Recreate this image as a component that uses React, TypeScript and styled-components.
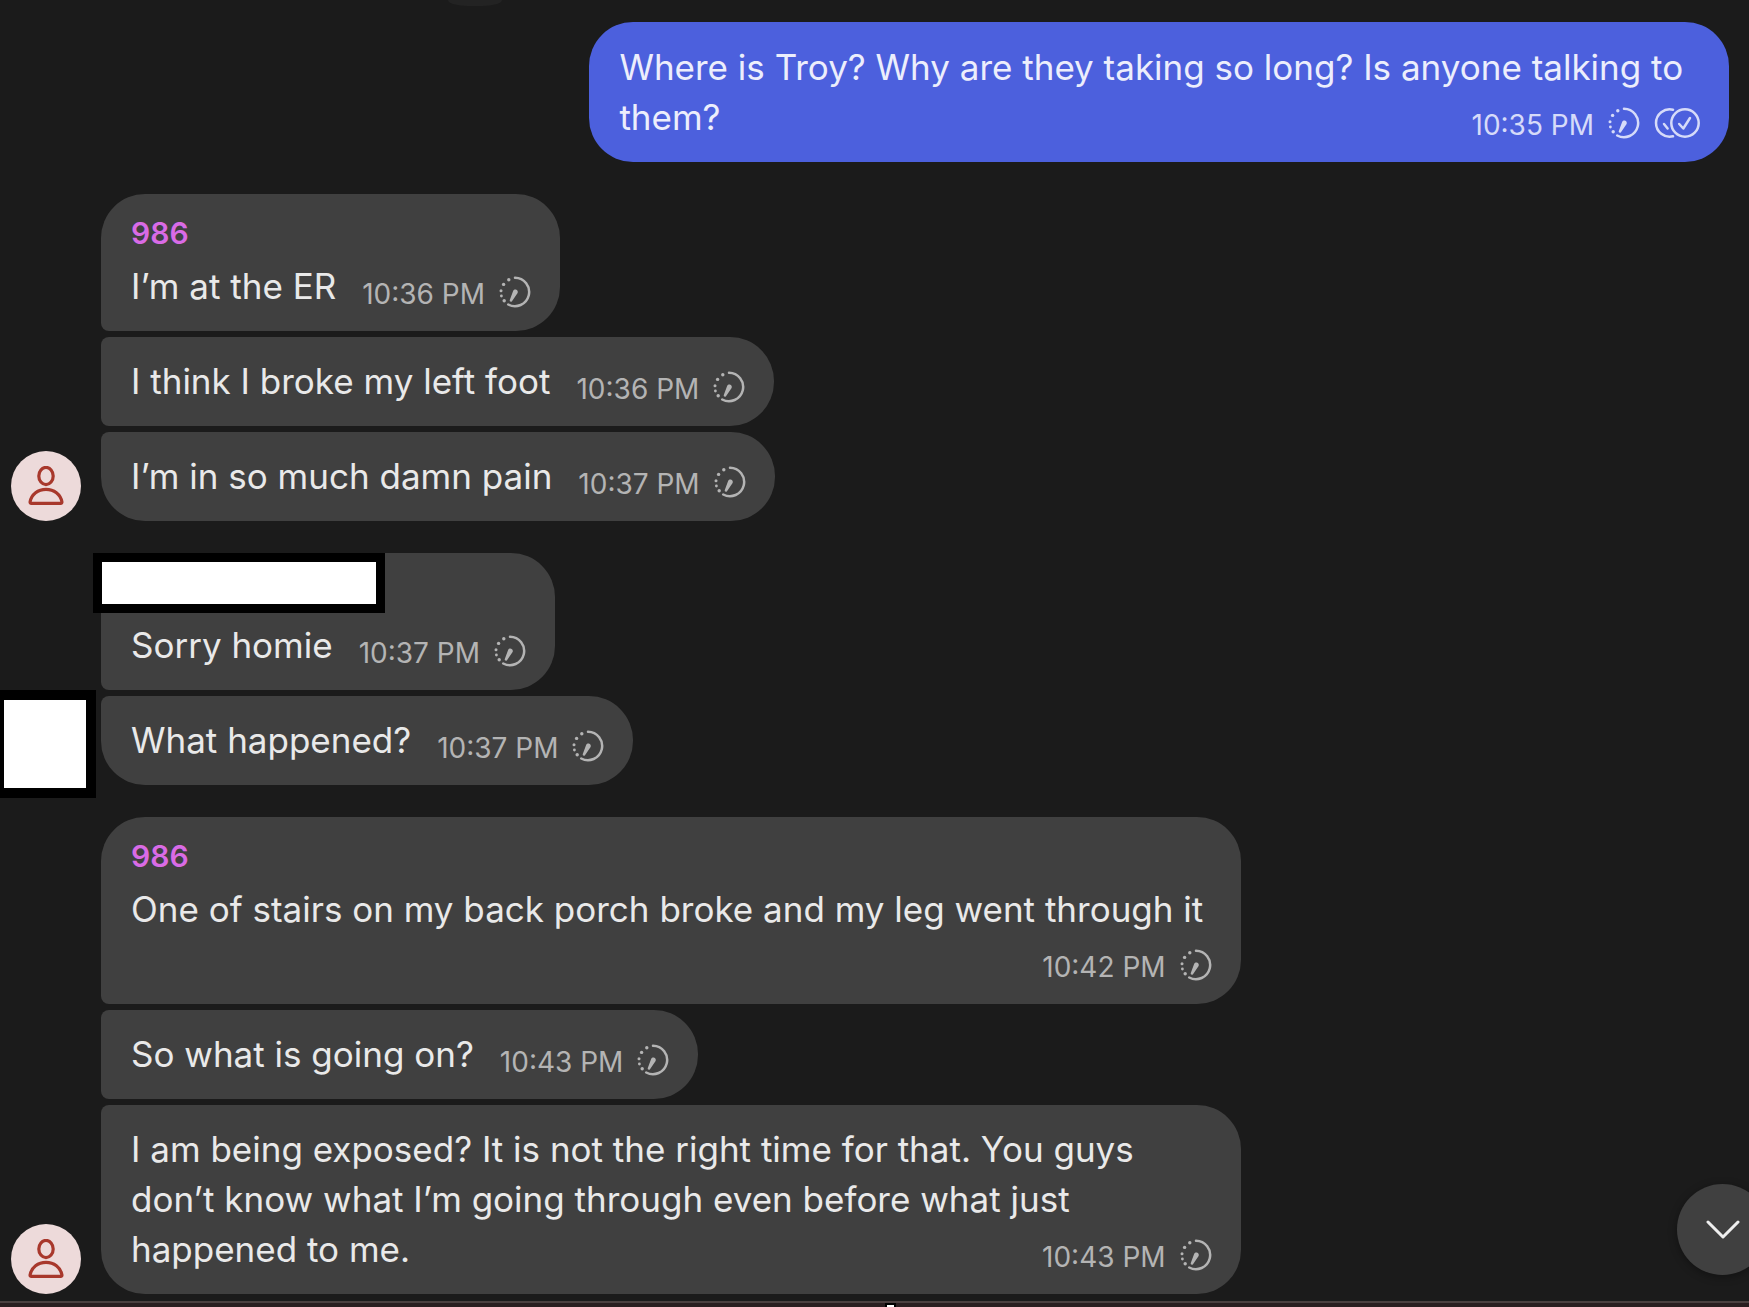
import React from "react";
import styled, { createGlobalStyle } from "styled-components";

const GlobalStyle = createGlobalStyle`
  * { box-sizing: border-box; }
  body {
    margin: 0;
    background: #1b1b1b;
    font-family: Inter, "Liberation Sans", sans-serif;
    color: #e9e9e9;
  }
`;

const Page = styled.main`
  position: relative;
  min-height: 100vh;
  display: flex;
  flex-direction: column;
  overflow: hidden;
`;

const DatePill = styled.div`
  width: 54px;
  height: 6px;
  margin-left: 448px;
  background: #232323;
  border-radius: 0 0 20px 20px / 0 0 6px 6px;
`;

const Timeline = styled.div`
  flex: 1;
  display: flex;
  flex-direction: column;
  gap: 32px;
  padding: 16px 20px 7px 11px;
`;

const Group = styled.section`
  display: flex;
  align-items: flex-end;
  gap: 20px;
`;

const AvatarSlot = styled.div`
  position: relative;
  flex: none;
  width: 70px;
  height: 70px;
`;

const Avatar = styled.div`
  display: flex;
  align-items: center;
  justify-content: center;
  width: 70px;
  height: 70px;
  border-radius: 50%;
  background: #eddada;
  color: #a8382c;
`;

const RedactedAvatar = styled.div`
  position: absolute;
  left: -17px;
  bottom: -13px;
  width: 102px;
  height: 108px;
  border: 10px solid #000;
  background: #fff;
`;

const Stack = styled.div<{ $outgoing?: boolean }>`
  flex: 1;
  min-width: 0;
  display: flex;
  flex-direction: column;
  align-items: ${(p) => (p.$outgoing ? "flex-end" : "flex-start")};
  gap: 6px;
`;

const Bubble = styled.article<{ $outgoing?: boolean; $first: boolean; $last: boolean }>`
  position: relative;
  max-width: 70%;
  padding: ${(p) => (p.$outgoing ? 20 : 19)}px 29px 20px 30px;
  background: ${(p) => (p.$outgoing ? "#4c60dd" : "#404040")};
  color: ${(p) => (p.$outgoing ? "#eceefc" : "#e9e9e9")};
  border-radius: ${(p) => (p.$first ? 44 : 8)}px 44px 44px ${(p) => (p.$last ? 44 : 8)}px;
`;

const Sender = styled.div`
  height: 40px;
  margin-bottom: 8px;
  font-size: 30px;
  line-height: 40px;
  font-weight: 600;
  color: #d96be6;
`;

const RedactedName = styled.div`
  position: absolute;
  left: -8px;
  top: 0;
  width: 292px;
  height: 60px;
  border: 9px solid #000;
  background: #fff;
`;

const Text = styled.div`
  display: flow-root;
  font-size: 35px;
  line-height: 50px;
`;

const Meta = styled.span<{ $outgoing?: boolean }>`
  float: right;
  display: flex;
  align-items: center;
  gap: 14px;
  height: 50px;
  margin-left: 26px;
  padding-top: 16px;
  font-size: 28px;
  line-height: 34px;
  color: ${(p) => (p.$outgoing ? "#d6dbf9" : "#b4b4b4")};

  svg {
    flex: none;
    margin-bottom: 4px;
  }
`;

const ScrollButton = styled.button`
  position: absolute;
  right: -19px;
  bottom: 32px;
  width: 91px;
  height: 91px;
  padding: 0;
  display: flex;
  align-items: center;
  justify-content: center;
  border: 0;
  border-radius: 50%;
  background: #404040;
  color: #efefef;
  box-shadow: 0 2px 8px rgba(0, 0, 0, 0.35);
`;

const BottomEdge = styled.div`
  display: flex;
  justify-content: center;
  height: 6px;
  border-top: 2px solid #4b4040;
  background: #2a1e20;
`;

const EdgeHandle = styled.div`
  width: 11px;
  margin-left: 31px;
  border: 2px solid #000;
  border-bottom: 0;
  background: #fff;
`;

const PersonIcon = () => (
  <svg width="36" height="40" viewBox="0 0 36 40" fill="none" stroke="currentColor" strokeWidth="3.2" aria-hidden="true">
    <ellipse cx="18" cy="10" rx="7.2" ry="8.600" />
    <path d="M3.400 37.400c-1 0-1.500-.6-1.300-1.600C3.500 28.300 10 23.300 18 23.300s14.500 5 15.900 12.500c.2 1-.3 1.600-1.300 1.600z" />
  </svg>
);

const TimerIcon = () => (
  <svg width="32" height="32" viewBox="0 0 32 32" fill="none" stroke="currentColor" strokeWidth="2.500" strokeLinecap="round" aria-hidden="true">
    <path d="M16 1.800A14.200 14.200 0 1 1 9.200 28.500" />
    <g fill="currentColor" stroke="none">
      <circle cx="5.200" cy="24.800" r="1.700" />
      <circle cx="2.400" cy="20" r="1.400" />
      <circle cx="2" cy="14.800" r="1.500" />
      <circle cx="4.600" cy="8.400" r="1.700" />
      <circle cx="9.800" cy="3.700" r="1.700" />
      <path d="M18.600 17 13 25.200c-.9 1.200-2.800.3-2.200-1.200L14.200 14.800c1.400-2.800 5.700-.6 4.400 2.200z" />
    </g>
  </svg>
);

const ReadIcon = () => (
  <svg width="46" height="32" viewBox="0 0 46 32" fill="none" stroke="currentColor" strokeWidth="2.500" strokeLinecap="round" strokeLinejoin="round" aria-hidden="true">
    <circle cx="31" cy="16" r="13.700" />
    <path d="M25.200 17 29.300 21.500 36 11" />
    <path d="M19 2.700A13.700 13.700 0 1 0 19 29.300" />
    <path d="M10 17l3.600 4.500" />
  </svg>
);

type Message = { text: string; time: string };
type MessageGroup = { sender?: string; redacted?: boolean; outgoing?: boolean; messages: Message[] };

const groups: MessageGroup[] = [
  {
    outgoing: true,
    messages: [{ text: "Where is Troy? Why are they taking so long? Is anyone talking to them?", time: "10:35 PM" }],
  },
  {
    sender: "986",
    messages: [
      { text: "I’m at the ER", time: "10:36 PM" },
      { text: "I think I broke my left foot", time: "10:36 PM" },
      { text: "I’m in so much damn pain", time: "10:37 PM" },
    ],
  },
  {
    redacted: true,
    messages: [
      { text: "Sorry homie", time: "10:37 PM" },
      { text: "What happened?", time: "10:37 PM" },
    ],
  },
  {
    sender: "986",
    messages: [
      { text: "One of stairs on my back porch broke and my leg went through it", time: "10:42 PM" },
      { text: "So what is going on?", time: "10:43 PM" },
      {
        text: "I am being exposed? It is not the right time for that. You guys don’t know what I’m going through even before what just happened to me.",
        time: "10:43 PM",
      },
    ],
  },
];

const MessageGroupView = ({ group }: { group: MessageGroup }) => {
  const { outgoing, redacted, sender, messages } = group;
  return (
    <Group>
      <AvatarSlot>
        {redacted && <RedactedAvatar />}
        {sender && (
          <Avatar>
            <PersonIcon />
          </Avatar>
        )}
      </AvatarSlot>
      <Stack $outgoing={outgoing}>
        {messages.map((m, i) => (
          <Bubble key={i} $outgoing={outgoing} $first={i === 0} $last={i === messages.length - 1}>
            {i === 0 && !outgoing && <Sender>{sender}</Sender>}
            {i === 0 && redacted && <RedactedName />}
            <Text>
              {m.text}
              <Meta $outgoing={outgoing}>
                <time>{m.time}</time>
                <TimerIcon />
                {outgoing && <ReadIcon />}
              </Meta>
            </Text>
          </Bubble>
        ))}
      </Stack>
    </Group>
  );
};

export default function App() {
  return (
    <>
      <GlobalStyle />
      <Page>
        <DatePill />
        <Timeline>
          {groups.map((g, i) => (
            <MessageGroupView key={i} group={g} />
          ))}
        </Timeline>
        <BottomEdge>
          <EdgeHandle />
        </BottomEdge>
        <ScrollButton type="button" aria-label="Scroll to bottom">
          <svg width="34" height="20" viewBox="0 0 34 20" fill="none" stroke="currentColor" strokeWidth="3" strokeLinecap="round" strokeLinejoin="round" aria-hidden="true">
            <path d="M2 2l15 15L32 2" />
          </svg>
        </ScrollButton>
      </Page>
    </>
  );
}
